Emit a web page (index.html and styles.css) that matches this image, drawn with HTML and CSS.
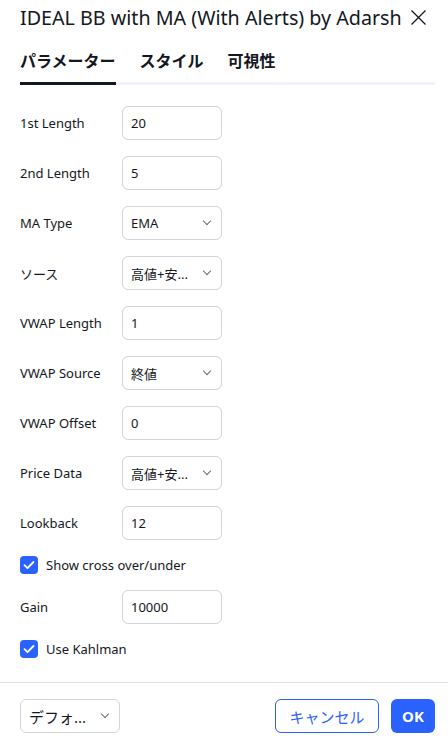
FILE: index.html
```html
<!DOCTYPE html>
<html lang="ja">
<head>
  <meta charset="UTF-8">
  <meta name="viewport" content="width=device-width, initial-scale=1.0">
  <title>IDEAL BB with MA (With Alerts) by Adarsh</title>
  <link rel="stylesheet" href="styles.css">
</head>
<body>

  <div class="dialog">
    <div class="header">
      <h1 class="title">IDEAL BB with MA (With Alerts) by Adarsh</h1>
      <button class="close" aria-label="close">
        <svg width="17" height="17" viewBox="0 0 17 17"><path d="M1.5 1.5l14 14M15.5 1.5l-14 14" stroke="#131722" stroke-width="1.3" fill="none"/></svg>
      </button>
    </div>

    <div class="tabs">
      <div class="tab active">パラメーター</div>
      <div class="tab">スタイル</div>
      <div class="tab">可視性</div>
    </div>

    <div class="content">
      <div class="row">
        <label>1st Length</label>
        <div class="field">20</div>
      </div>
      <div class="row">
        <label>2nd Length</label>
        <div class="field">5</div>
      </div>
      <div class="row">
        <label>MA Type</label>
        <div class="field select"><span>EMA</span><i class="chev"></i></div>
      </div>
      <div class="row">
        <label>ソース</label>
        <div class="field select"><span>高値+安...</span><i class="chev"></i></div>
      </div>
      <div class="row">
        <label>VWAP Length</label>
        <div class="field">1</div>
      </div>
      <div class="row">
        <label>VWAP Source</label>
        <div class="field select"><span>終値</span><i class="chev"></i></div>
      </div>
      <div class="row">
        <label>VWAP Offset</label>
        <div class="field">0</div>
      </div>
      <div class="row">
        <label>Price Data</label>
        <div class="field select"><span>高値+安...</span><i class="chev"></i></div>
      </div>
      <div class="row">
        <label>Lookback</label>
        <div class="field">12</div>
      </div>
      <div class="check-row">
        <span class="checkbox">
          <svg width="12" height="10" viewBox="0 0 12 10"><path d="M1.5 5.2l3 3 6-6.2" stroke="#fff" stroke-width="1.8" fill="none" stroke-linecap="round" stroke-linejoin="round"/></svg>
        </span>
        <span>Show cross over/under</span>
      </div>
      <div class="row">
        <label>Gain</label>
        <div class="field">10000</div>
      </div>
      <div class="check-row">
        <span class="checkbox">
          <svg width="12" height="10" viewBox="0 0 12 10"><path d="M1.5 5.2l3 3 6-6.2" stroke="#fff" stroke-width="1.8" fill="none" stroke-linecap="round" stroke-linejoin="round"/></svg>
        </span>
        <span>Use Kahlman</span>
      </div>
    </div>

    <div class="footer">
      <div class="field select defaults"><span>デフォ...</span><i class="chev"></i></div>
      <div class="buttons">
        <button class="btn cancel">キャンセル</button>
        <button class="btn ok">OK</button>
      </div>
    </div>
  </div>

</body>
</html>
```

FILE: styles.css
```css
body {
  margin: 0;
  background-color: #ffffff;
  font-family: 'Noto Sans', 'Noto Sans CJK JP', sans-serif;
  color: #131722;
}
.dialog {
  width: 448px;
  height: 748px;
  display: flex;
  flex-direction: column;
}
.header {
  height: 34px;
  padding: 0 20px;
  display: flex;
  align-items: center;
  gap: 8px;
}
.title {
  margin: 0;
  font-size: 19.7px;
  font-weight: 400;
  white-space: nowrap;
}
.close {
  border: none;
  background: none;
  padding: 0;
  display: flex;
}
.tabs {
  margin: 12px 13px 0 20px;
  height: 36px;
  display: flex;
  gap: 24px;
  border-bottom: 3px solid #f0f3fa;
}
.tab {
  font-size: 16px;
  font-weight: 700;
  line-height: 30px;
  margin-bottom: -3px;
  border-bottom: 3px solid transparent;
}
.tab.active {
  border-bottom-color: #131722;
}
.content {
  padding: 21px 20px 24px;
  display: flex;
  flex-direction: column;
  gap: 16px;
  border-bottom: 1px solid #e0e3eb;
}
.row {
  display: flex;
  align-items: center;
  height: 34px;
}
.row label {
  width: 102px;
  font-size: 13px;
}
.field {
  box-sizing: border-box;
  width: 100px;
  height: 34px;
  padding: 0 8px;
  border: 1px solid #d1d4dc;
  border-radius: 6px;
  font-size: 13px;
  display: flex;
  align-items: center;
}
.select {
  justify-content: space-between;
}
.chev {
  width: 5px;
  height: 5px;
  border-right: 1.3px solid #6a6d78;
  border-bottom: 1.3px solid #6a6d78;
  transform: rotate(45deg);
  margin: -4px 3px 0 0;
}
.check-row {
  height: 18px;
  display: flex;
  align-items: center;
  gap: 8px;
  font-size: 13px;
}
.checkbox {
  width: 18px;
  height: 18px;
  border-radius: 4px;
  background-color: #2962ff;
  display: flex;
  align-items: center;
  justify-content: center;
}
.footer {
  padding: 16px 13px 0 20px;
  display: flex;
  justify-content: space-between;
}
.defaults {
  width: 100px;
  font-size: 15px;
}
.buttons {
  display: flex;
  gap: 12px;
}
.btn {
  height: 34px;
  border-radius: 6px;
  font-family: 'Noto Sans', 'Noto Sans CJK JP', sans-serif;
  font-size: 15px;
  cursor: pointer;
}
.cancel {
  width: 104px;
  background-color: #ffffff;
  border: 1px solid #2962ff;
  color: #2962ff;
}
.ok {
  width: 44px;
  background-color: #2962ff;
  border: none;
  color: #ffffff;
  font-weight: 700;
}
```
